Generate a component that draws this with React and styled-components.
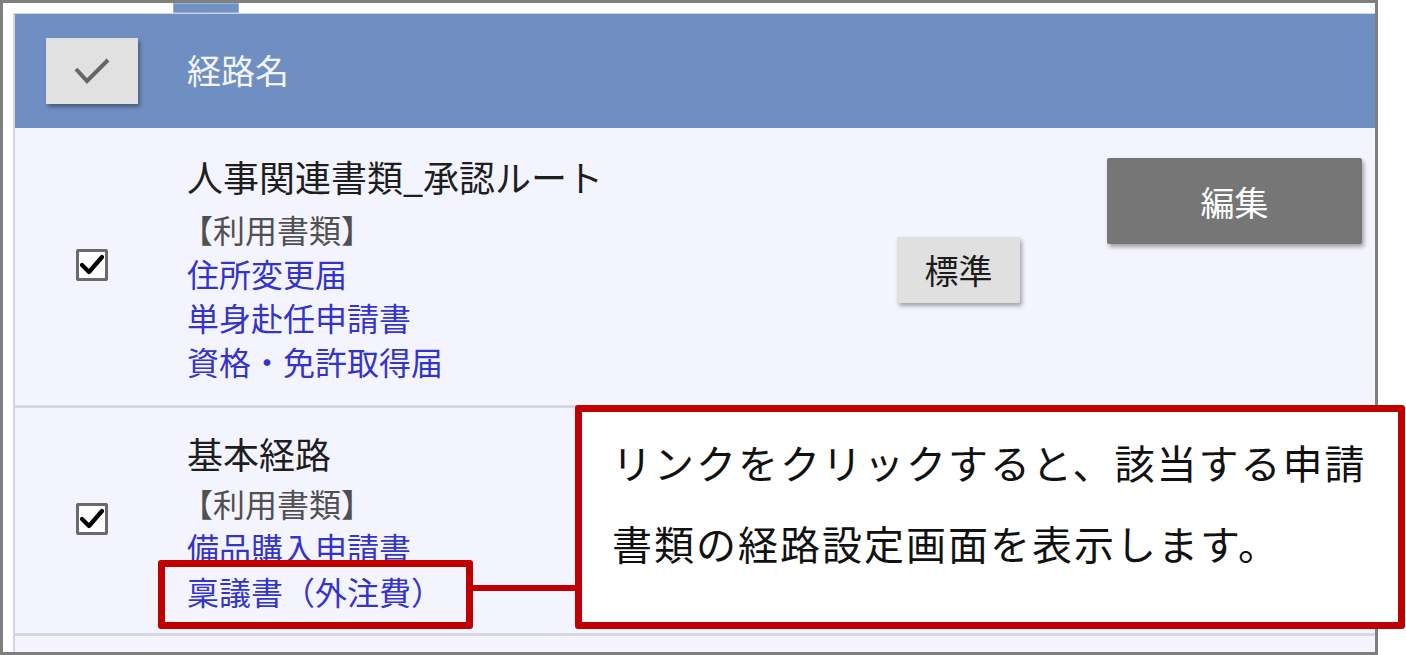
import styled, { createGlobalStyle } from "styled-components"

const GlobalStyle = createGlobalStyle`
  html, body {
    margin: 0;
    padding: 0;
    background: #ffffff;
  }
  body {
    font-family: "Noto Sans CJK JP", "Noto Sans", sans-serif;
  }
`

const Page = styled.div`
  position: relative;
  width: 1406px;
  height: 655px;
  overflow: hidden;
`

const Frame = styled.div`
  box-sizing: border-box;
  width: 1378px;
  height: 655px;
  border: 3px solid #7f7f7f;
  background: #ffffff;
  padding: 10px 0 0 10px;
  display: flex;
  flex-direction: column;
  overflow: hidden;
  position: relative;
`

const TopTab = styled.div`
  position: absolute;
  top: 0;
  left: 170px;
  width: 66px;
  height: 10px;
  background: #7191c2;
  box-shadow: inset 0 0 0 1px #98b0d6;
`

const Table = styled.div`
  flex: 1;
  display: flex;
  flex-direction: column;
  background: #f4f4fe;
  border-left: 2px solid #d4d4e2;
  border-top: 1px solid #c9d3e6;
`

const Grid = styled.div`
  display: grid;
  grid-template-columns: 154px 728px 123px 87px 255px;
  box-sizing: border-box;
`

const HeaderRow = styled(Grid)`
  height: 114px;
  background: #6f8ec1;
  align-items: center;
`

const Row = styled(Grid)`
  padding: ${(p) => p.$pad};
  border-bottom: 3px solid #d6d6e6;
`

const CheckCell = styled.div`
  display: flex;
  align-items: center;
  justify-content: center;
  margin-top: ${(p) => p.$shift || 0}px;
`

const AllButton = styled.div`
  width: 92px;
  height: 66px;
  background: #e1e1e1;
  box-shadow: 2px 3px 4px rgba(0, 0, 0, 0.35);
  display: flex;
  align-items: center;
  justify-content: center;
`

const HeaderLabel = styled.div`
  padding-left: 18px;
  color: #f4f6ff;
  font-size: 34px;
  line-height: 44px;
  margin-top: -2px;
`

const Box = styled.div`
  width: 32px;
  height: 32px;
  box-sizing: border-box;
  border: 3px solid #6a6a6a;
  border-radius: 2px;
  background: #ffffff;
  display: flex;
  align-items: center;
  justify-content: center;
`

const TextCell = styled.div`
  padding-left: 18px;
  display: flex;
  flex-direction: column;
`

const Title = styled.div`
  color: #1e1e1e;
  font-size: 36px;
  line-height: 48px;
  margin-bottom: ${(p) => p.$gap}px;
`

const Caption = styled.div`
  color: #505050;
  font-size: 32px;
  line-height: 44px;
  margin-left: -6px;
`

const DocLink = styled.a`
  color: #3434cc;
  font-size: 32px;
  line-height: 44px;
  text-decoration: none;
`

const ButtonCell = styled.div`
  display: flex;
  grid-column: ${(p) => p.$col};
  align-self: ${(p) => p.$align};
  margin-top: ${(p) => p.$mt || 0}px;
`

const Button = styled.div`
  flex: none;
  width: ${(p) => p.$w}px;
  height: ${(p) => p.$h}px;
  background: ${(p) => (p.$dark ? "#767676" : "#e0e0e0")};
  color: ${(p) => (p.$dark ? "#ffffff" : "#1c1c1c")};
  font-size: 34px;
  display: flex;
  align-items: center;
  justify-content: center;
  box-shadow: 2px 3px 4px rgba(0, 0, 0, 0.35);
  border-radius: 2px;
`

const Callout = styled.div`
  position: absolute;
  left: 575px;
  top: 405px;
  width: 830px;
  height: 224px;
  box-sizing: border-box;
  border: 7px solid #c00000;
  border-radius: 3px;
  background: #ffffff;
  padding: 10px 0 0 30px;
  color: #111111;
  font-size: 40px;
  letter-spacing: 2px;
  line-height: 81px;
`

const Highlight = styled.div`
  position: absolute;
  left: 158px;
  top: 560px;
  width: 315px;
  height: 69px;
  box-sizing: border-box;
  border: 7px solid #c00000;
  border-radius: 3px;
`

const Connector = styled.div`
  position: absolute;
  left: 473px;
  top: 585px;
  width: 104px;
  height: 6px;
  background: #c00000;
`

function GrayCheck() {
  return (
    <svg width="40" height="28" viewBox="0 0 40 28">
      <path d="M4 12 L15 24 L36 3" fill="none" stroke="#666666" strokeWidth="4" strokeLinejoin="miter" />
    </svg>
  )
}

function CheckBox() {
  return (
    <Box>
      <svg width="24" height="22" viewBox="0 0 24 22">
        <path d="M2 11 L9 18 L22 3" fill="none" stroke="#000000" strokeWidth="4.2" strokeLinecap="round" strokeLinejoin="round" />
      </svg>
    </Box>
  )
}

const routes = [
  {
    title: "人事関連書類_承認ルート",
    docs: ["住所変更届", "単身赴任申請書", "資格・免許取得届"],
    pad: "24px 0 22px",
    gap: 7,
    std: true,
    shift: -6,
  },
  {
    title: "基本経路",
    docs: ["備品購入申請書", "稟議書（外注費）"],
    pad: "21px 0 20px",
    gap: 4,
    shift: -4,
  },
]

export default function App() {
  return (
    <>
      <GlobalStyle />
      <Page>
        <Frame>
          <TopTab />
          <Table>
            <HeaderRow>
              <CheckCell>
                <AllButton>
                  <GrayCheck />
                </AllButton>
              </CheckCell>
              <HeaderLabel>経路名</HeaderLabel>
            </HeaderRow>
            {routes.map((r) => (
              <Row key={r.title} $pad={r.pad}>
                <CheckCell $shift={r.shift}>
                  <CheckBox />
                </CheckCell>
                <TextCell>
                  <Title $gap={r.gap}>{r.title}</Title>
                  <Caption>【利用書類】</Caption>
                  {r.docs.map((d) => (
                    <DocLink key={d} href="#">
                      {d}
                    </DocLink>
                  ))}
                </TextCell>
                {r.std && (
                  <>
                    <ButtonCell $col={3} $align="center" $mt={4}>
                      <Button $w={123} $h={66}>
                        標準
                      </Button>
                    </ButtonCell>
                    <ButtonCell $col={5} $align="start" $mt={6}>
                      <Button $dark $w={255} $h={86}>
                        編集
                      </Button>
                    </ButtonCell>
                  </>
                )}
              </Row>
            ))}
          </Table>
        </Frame>
        <Highlight />
        <Connector />
        <Callout>
          リンクをクリックすると、該当する申請
          <br />
          書類の経路設定画面を表示します。
        </Callout>
      </Page>
    </>
  )
}
